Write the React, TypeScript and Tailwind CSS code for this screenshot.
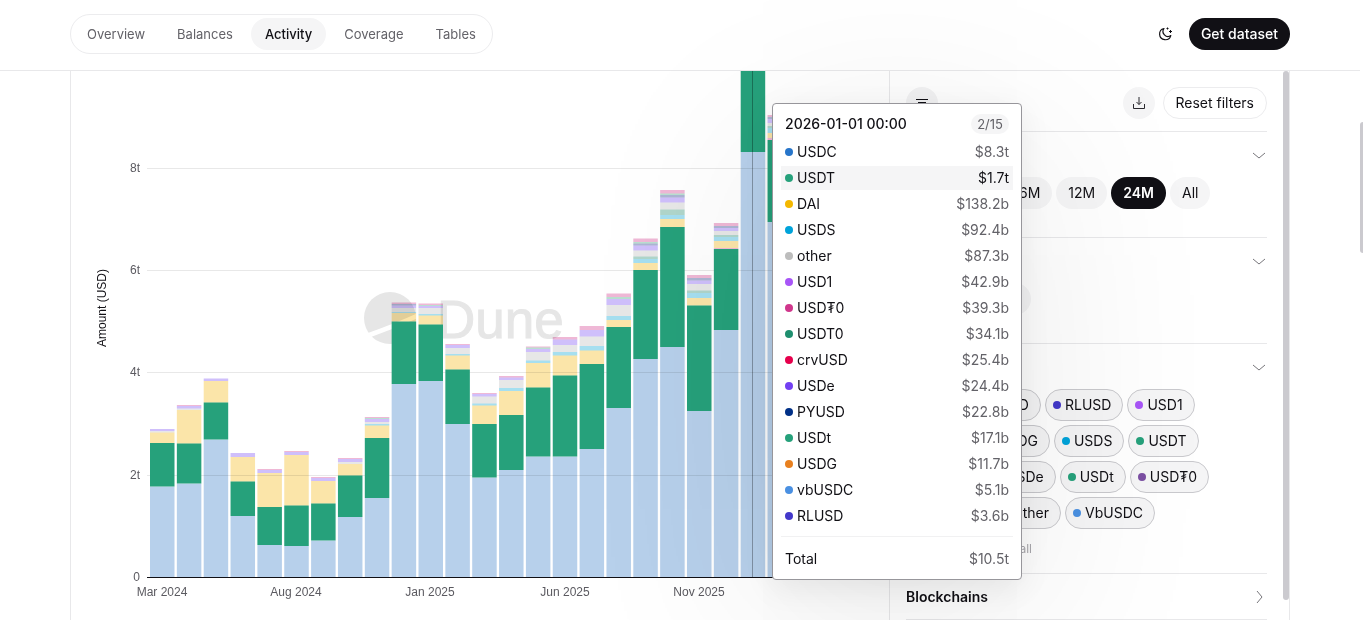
import { useState } from 'react'

const TABS = ['Overview', 'Balances', 'Activity', 'Coverage', 'Tables']

const RANGES = ['6M', '12M', '24M', 'All']

const TOOLTIP_ROWS = [
  { name: 'USDC', value: '$8.3t', color: '#2775ca' },
  { name: 'USDT', value: '$1.7t', color: '#26a17b' },
  { name: 'DAI', value: '$138.2b', color: '#f4b800' },
  { name: 'USDS', value: '$92.4b', color: '#00a3da' },
  { name: 'other', value: '$87.3b', color: '#bdbdbd' },
  { name: 'USD1', value: '$42.9b', color: '#a855f7' },
  { name: 'USD₮0', value: '$39.3b', color: '#d0378c' },
  { name: 'USDT0', value: '$34.1b', color: '#1f8f6f' },
  { name: 'crvUSD', value: '$25.4b', color: '#e6004c' },
  { name: 'USDe', value: '$24.4b', color: '#7340f2' },
  { name: 'PYUSD', value: '$22.8b', color: '#003087' },
  { name: 'USDt', value: '$17.1b', color: '#26a17b' },
  { name: 'USDG', value: '$11.7b', color: '#e8801f' },
  { name: 'vbUSDC', value: '$5.1b', color: '#4a90e2' },
  { name: 'RLUSD', value: '$3.6b', color: '#4338ca' },
]

const TOKEN_ROWS = [
  {
    indent: 'pl-[55px]',
    tokens: [
      { name: 'PYUSD', color: '#003087' },
      { name: 'RLUSD', color: '#4338ca' },
      { name: 'USD1', color: '#a855f7' },
    ],
  },
  {
    indent: 'pl-[72px]',
    tokens: [
      { name: 'USDG', color: '#e8801f' },
      { name: 'USDS', color: '#00a3da' },
      { name: 'USDT', color: '#26a17b' },
    ],
  },
  {
    indent: 'pl-[80px]',
    tokens: [
      { name: 'USDe', color: '#7340f2' },
      { name: 'USDt', color: '#26a17b' },
      { name: 'USD₮0', color: '#7b4fa3' },
    ],
  },
  {
    indent: 'pl-[86px]',
    tokens: [
      { name: 'Other', color: '#bdbdbd' },
      { name: 'VbUSDC', color: '#4a90e2' },
    ],
  },
]

const SERIES = {
  usdc: '#b7d0eb',
  usdt: '#26a17b',
  dai: '#fbe5a9',
  usds: '#a6dff0',
  sage: '#b0d6cb',
  other: '#e7e7e7',
  usde: '#cfbffb',
  slate: '#adb6d4',
  mint: '#b9dfd0',
  pink: '#efb8d6',
}

type SeriesKey = keyof typeof SERIES
type Bar = [SeriesKey, number][]

const BASELINE = 506

// each entry is the upper edge of a segment, stacked from the baseline up
const BARS: Bar[] = [
  [['usdc', 415.5], ['usdt', 372], ['dai', 361.5], ['other', 360], ['usde', 358]],
  [['usdc', 412.5], ['usdt', 372.5], ['dai', 339], ['other', 337.5], ['usde', 335], ['pink', 334]],
  [['usdc', 368.5], ['usdt', 331.5], ['dai', 310], ['usde', 307.5]],
  [['usdc', 445], ['usdt', 410.5], ['dai', 386], ['usde', 382]],
  [['usdc', 474], ['usdt', 436], ['dai', 402], ['usde', 399], ['pink', 398]],
  [['usdc', 475], ['usdt', 434.5], ['dai', 384], ['usde', 381], ['pink', 380]],
  [['usdc', 469.5], ['usdt', 432.5], ['dai', 410], ['usde', 407], ['pink', 406]],
  [['usdc', 446], ['usdt', 404.5], ['dai', 393], ['other', 391], ['usde', 388], ['pink', 387]],
  [['usdc', 427], ['usdt', 367], ['dai', 354.5], ['usds', 353], ['other', 351], ['usde', 348], ['mint', 347], ['pink', 346]],
  [['usdc', 313], ['usdt', 250.5], ['dai', 242], ['usds', 241], ['other', 237], ['usde', 234.5], ['slate', 233], ['pink', 231.5]],
  [['usdc', 310], ['usdt', 253.5], ['dai', 244.5], ['usds', 243], ['other', 237], ['usde', 235], ['mint', 234], ['pink', 232.5]],
  [['usdc', 353], ['usdt', 298.5], ['dai', 284.5], ['usds', 283], ['other', 277], ['usde', 274], ['pink', 273]],
  [['usdc', 406.5], ['usdt', 353], ['dai', 334.5], ['usds', 332.5], ['other', 325.5], ['usde', 323], ['pink', 322]],
  [['usdc', 399], ['usdt', 344], ['dai', 320], ['usds', 317], ['other', 309], ['usde', 306.5], ['pink', 305]],
  [['usdc', 385.5], ['usdt', 316.5], ['dai', 292], ['usds', 289.5], ['other', 281], ['usde', 278], ['mint', 276.5], ['pink', 275.5]],
  [['usdc', 385.5], ['usdt', 304.5], ['dai', 284.5], ['usds', 281], ['other', 274], ['usde', 268.5], ['pink', 266]],
  [['usdc', 378], ['usdt', 293], ['dai', 279.5], ['usds', 275], ['other', 265.5], ['usde', 259], ['pink', 255]],
  [['usdc', 337], ['usdt', 256], ['dai', 249], ['usds', 245], ['other', 234], ['usde', 228], ['mint', 226], ['pink', 222.5]],
  [['usdc', 288], ['usdt', 199], ['dai', 192], ['usds', 188], ['sage', 185.5], ['other', 179.5], ['usde', 174.5], ['slate', 172.5], ['mint', 171], ['pink', 167.5]],
  [['usdc', 276], ['usdt', 156], ['dai', 148], ['usds', 144], ['sage', 138.5], ['other', 131.5], ['usde', 126.5], ['slate', 124], ['mint', 122.5], ['pink', 119]],
  [['usdc', 340], ['usdt', 234.5], ['dai', 227], ['usds', 222], ['sage', 219.5], ['other', 213], ['usde', 209.5], ['slate', 207], ['pink', 204]],
  [['usdc', 259], ['usdt', 178], ['pink', 177], ['dai', 170], ['usds', 166], ['sage', 164], ['other', 160], ['usde', 157], ['slate', 155], ['pink', 152]],
  [['usdc', 81], ['usdt', -6]],
  [['usdc', 151], ['usdt', 69], ['pink', 67], ['dai', 62], ['usds', 57], ['sage', 55], ['other', 52], ['usde', 48], ['slate', 46], ['pink', 44]],
]

const Y_TICKS = [
  { label: '0', y: 506 },
  { label: '2t', y: 404 },
  { label: '4t', y: 301 },
  { label: '6t', y: 199 },
  { label: '8t', y: 97 },
]

const X_TICKS = [
  { label: 'Mar 2024', x: 91 },
  { label: 'Aug 2024', x: 225 },
  { label: 'Jan 2025', x: 359 },
  { label: 'Jun 2025', x: 494 },
  { label: 'Nov 2025', x: 628 },
]

export default function App() {
  const [tab, setTab] = useState('Activity')
  const [range, setRange] = useState('24M')

  return (
    <div className="flex h-screen overflow-hidden bg-white font-['Inter',sans-serif] text-sm text-[#111015]">
      <div className="flex min-w-0 flex-1 flex-col">
        <header className="shrink-0 border-b border-[#e8e8ea]">
          <div className="mx-auto flex h-[70px] max-w-[1220px] items-center justify-between pb-[2px]">
            <nav className="flex h-10 items-center gap-1 rounded-full border border-[#ececee] px-0.5 text-[13px]">
              {TABS.map(t => (
                <a
                  key={t}
                  href={`#${t.toLowerCase()}`}
                  onClick={() => setTab(t)}
                  className={
                    t === tab
                      ? 'flex h-8 items-center rounded-full bg-[#f5f5f6] px-3.5 font-medium text-[#111015]'
                      : 'flex h-8 items-center rounded-full px-3.5 text-[#636268]'
                  }
                >
                  {t}
                </a>
              ))}
            </nav>
            <div className="flex items-center gap-2">
              <button type="button" aria-label="Toggle theme" className="flex size-8 items-center justify-center">
                <MoonIcon />
              </button>
              <a href="#dataset" className="flex h-8 items-center rounded-full bg-[#111015] px-3 font-medium text-white">
                Get dataset
              </a>
            </div>
          </div>
        </header>

        <main className="mx-auto flex min-h-0 w-full max-w-[1220px] flex-1 border-x border-[#e8e8ea]">
          <section className="relative min-w-0 flex-1">
            <Chart />
            <Tooltip />
          </section>

          <aside className="flex w-[400px] shrink-0 overflow-hidden border-l border-[#e8e8ea]">
            <div className="min-w-0 flex-1 pl-4">
              <div className="flex h-[60px] items-center gap-2 pt-1">
                <button type="button" aria-label="Filters" className="mr-auto flex size-8 items-center justify-center rounded-full bg-[#f3f3f4]">
                  <FilterIcon />
                </button>
                <button type="button" aria-label="Download" className="flex size-8 items-center justify-center rounded-full bg-[#f5f5f6]">
                  <DownloadIcon />
                </button>
                <button type="button" className="h-8 rounded-full border border-[#ececee] bg-white px-3">
                  Reset filters
                </button>
              </div>

              <FilterSection label="Time range">
                <div className="flex gap-1 pb-7 pl-[101px]">
                  {RANGES.map(r => (
                    <button
                      key={r}
                      type="button"
                      onClick={() => setRange(r)}
                      className={
                        r === range
                          ? 'h-8 rounded-full bg-[#111015] px-3 font-semibold text-white'
                          : 'h-8 rounded-full bg-[#f5f5f6] px-3'
                      }
                    >
                      {r}
                    </button>
                  ))}
                </div>
              </FilterSection>

              <FilterSection label="Metric">
                <div className="flex pb-7">
                  <button type="button" aria-label="Volume" className="h-8 w-[125px] rounded-full bg-[#f5f5f6]" />
                </div>
              </FilterSection>

              <FilterSection label="Tokens">
                <div className="flex flex-col gap-1">
                  {TOKEN_ROWS.map(row => (
                    <div key={row.indent} className={`flex gap-1 ${row.indent}`}>
                      {row.tokens.map(token => (
                        <button
                          key={token.name}
                          type="button"
                          className="flex h-8 items-center gap-1 rounded-full border border-[#c9c9cd] bg-[#f5f5f6] pr-[11px] pl-[7px]"
                        >
                          <Dot color={token.color} />
                          {token.name}
                        </button>
                      ))}
                    </div>
                  ))}
                </div>
                <div className="flex h-11 items-center pb-1 pl-20">
                  <button type="button" className="h-5 text-xs text-[#a9a8ad]">Clear all</button>
                </div>
              </FilterSection>

              <FilterSection title="Blockchains" />
              <div className="border-t border-[#e8e8ea]" />
            </div>
            <div className="mb-5 ml-4 w-1.5 rounded-full bg-[#cbcacf]" />
          </aside>
        </main>
      </div>
      <div className="mt-[122px] h-[131px] w-[3px] shrink-0 rounded-l-full bg-[#cbcacf]" />
    </div>
  )
}

interface FilterSectionProps {
  title?: string
  label?: string
  children?: React.ReactNode
}

function FilterSection({ title, label, children }: FilterSectionProps) {
  return (
    <div className="border-t border-[#e8e8ea]">
      <button type="button" aria-label={label} className="flex h-[45px] w-full items-center font-semibold">
        {title}
        <svg
          width="16"
          height="16"
          viewBox="0 0 16 16"
          fill="none"
          stroke="#77767b"
          className={children ? 'ml-auto' : 'ml-auto -rotate-90'}
        >
          <path d="M2 6l6 5 6-5" />
        </svg>
      </button>
      {children}
    </div>
  )
}

function Dot({ color }: { color: string }) {
  return <span className="size-2 shrink-0 rounded-full" style={{ backgroundColor: color }} />
}

function Tooltip() {
  return (
    <div className="absolute top-8 left-[701px] z-10 w-[250px] rounded-sm border border-[#97969b] bg-white px-2 pt-2.5 shadow-[0_8px_32px_rgba(0,0,0,0.07),0_40px_200px_rgba(0,0,0,0.1)]">
      <div className="flex h-5 items-center justify-between px-1 font-medium">
        <span>2026-01-01 00:00</span>
        <span className="rounded-full bg-[#f5f5f6] px-1.5 text-[13px] leading-5 font-normal text-[#636268]">2/15</span>
      </div>
      <ul className="mt-1.5 flex flex-col gap-0.5">
        {TOOLTIP_ROWS.map(row => (
          <li
            key={row.name}
            className={
              row.name === 'USDT'
                ? 'flex h-6 items-center gap-1 bg-[#f5f5f6] px-1'
                : 'flex h-6 items-center gap-1 px-1'
            }
          >
            <Dot color={row.color} />
            <span>{row.name}</span>
            <span className={row.name === 'USDT' ? 'ml-auto' : 'ml-auto text-[#636268]'}>{row.value}</span>
          </li>
        ))}
      </ul>
      <div className="mt-2 flex h-[43px] items-center justify-between border-t border-[#f1f1f2] px-1 pt-0.5">
        <span>Total</span>
        <span className="text-[#636268]">$10.5t</span>
      </div>
    </div>
  )
}

function Chart() {
  return (
    <svg
      viewBox="0 0 818 549"
      className="block w-full overflow-hidden font-['Liberation_Sans',Arial,sans-serif] text-xs"
      role="img"
      aria-label="Transfer volume by token"
    >
      <g fill="#e6e6e6">
        <circle cx="319" cy="247" r="26" />
        <path d="M297 262q28-10 50-20v5q-22 10-47 19z" fill="#fff" />
        <text x="366" y="267" fontSize="53" stroke="#e6e6e6">Dune</text>
      </g>

      {Y_TICKS.map(tick => (
        <g key={tick.label}>
          <text x="69" y={tick.y + 4} textAnchor="end" fill="#5b5a60">{tick.label}</text>
          {tick.y !== BASELINE && (
            <path d={`M76 ${tick.y + 0.5}H818`} stroke="#000" strokeOpacity="0.09" />
          )}
        </g>
      ))}

      {BARS.map((bar, i) => (
        <g key={i}>
          {bar.map(([series, top], j) => {
            const bottom = j === 0 ? BASELINE : bar[j - 1][1]
            return (
              <rect
                key={j}
                x={79 + i * 26.85}
                y={top}
                width="24.5"
                height={bottom - top}
                fill={SERIES[series]}
                className={series === 'usdt' ? '' : 'mix-blend-multiply'}
              />
            )
          })}
        </g>
      ))}

      <path d="M76 506.5H818" stroke="#111015" />
      <path d="M681.5 0V506" stroke="#000" strokeOpacity="0.3" />

      {X_TICKS.map(tick => (
        <text key={tick.label} x={tick.x} y="525" textAnchor="middle" fill="#5b5a60">{tick.label}</text>
      ))}
      <text transform="translate(35 237) rotate(-90)" textAnchor="middle" fill="#111015">Amount (USD)</text>
    </svg>
  )
}

function MoonIcon() {
  return (
    <svg width="16" height="16" viewBox="0 0 16 16" fill="none" stroke="#111015">
      <path d="M7 2.500A5.700 5.700 0 1 0 13.800 9.600 5 5 0 0 1 7 2.500z" strokeLinejoin="round" strokeWidth="1.2" />
      <path d="M10.500 1.500v2M9.500 2.500h2M13.500 4v3M12 5.500h3" />
    </svg>
  )
}

function FilterIcon() {
  return (
    <svg width="16" height="16" viewBox="0 0 16 16" fill="none" stroke="#111015">
      <path d="M2 4.500h12M4 7.500h8M6 10.500h4" />
    </svg>
  )
}

function DownloadIcon() {
  return (
    <svg width="16" height="16" viewBox="0 0 16 16" fill="none" stroke="#2b2a30">
      <path d="M8 2v7.500M5.500 7L8 9.500 10.500 7M2.500 9v4.500h11V9" />
    </svg>
  )
}
